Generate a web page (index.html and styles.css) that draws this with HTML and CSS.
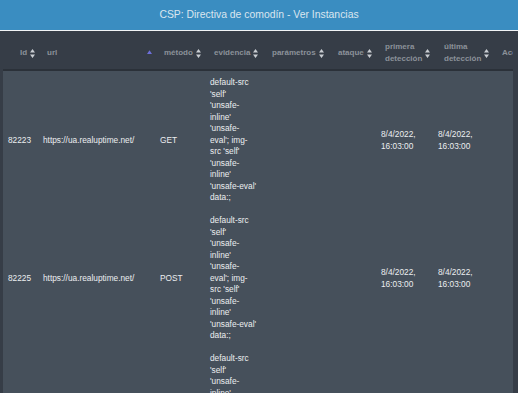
FILE: index.html
```html
<!DOCTYPE html>
<html lang="es">
<head>
    <meta charset="UTF-8">
    <title>CSP: Directiva de comodín - Ver Instancias</title>
    <link rel="stylesheet" href="styles.css">
</head>
<body>
    <div class="titlebar">CSP: Directiva de comodín - Ver Instancias</div>

    <div class="table-wrap">
        <table class="instances">
            <colgroup>
                <col class="w-id">
                <col class="w-url">
                <col class="w-method">
                <col class="w-evidence">
                <col class="w-param">
                <col class="w-attack">
                <col class="w-first">
                <col class="w-last">
                <col class="w-actions">
            </colgroup>
            <thead>
                <tr>
                    <th class="th-id"><span class="th-inner">Id <svg class="sort" viewBox="0 0 5 9"><path d="M2.5 0 5 3.6H0z M2.5 9 5 5.4H0z"/></svg></span></th>
                    <th><span class="th-inner th-url">url <svg class="sort-asc" viewBox="0 0 4 3"><path d="M2 0 4 3H0z"/></svg></span></th>
                    <th><span class="th-inner">método <svg class="sort" viewBox="0 0 5 9"><path d="M2.5 0 5 3.6H0z M2.5 9 5 5.4H0z"/></svg></span></th>
                    <th><span class="th-inner">evidencia <svg class="sort" viewBox="0 0 5 9"><path d="M2.5 0 5 3.6H0z M2.5 9 5 5.4H0z"/></svg></span></th>
                    <th><span class="th-inner">parámetros <svg class="sort" viewBox="0 0 5 9"><path d="M2.5 0 5 3.6H0z M2.5 9 5 5.4H0z"/></svg></span></th>
                    <th><span class="th-inner">ataque <svg class="sort" viewBox="0 0 5 9"><path d="M2.5 0 5 3.6H0z M2.5 9 5 5.4H0z"/></svg></span></th>
                    <th><span class="th-inner"><span>primera<br>detección</span> <svg class="sort" viewBox="0 0 5 9"><path d="M2.5 0 5 3.6H0z M2.5 9 5 5.4H0z"/></svg></span></th>
                    <th class="th-last"><span class="th-inner"><span>última<br>detección</span> <svg class="sort" viewBox="0 0 5 9"><path d="M2.5 0 5 3.6H0z M2.5 9 5 5.4H0z"/></svg></span></th>
                    <th><span class="th-inner">Acciones</span></th>
                </tr>
            </thead>
            <tbody>
                <tr>
                    <td>82223</td>
                    <td>https://ua.realuptime.net/</td>
                    <td>GET</td>
                    <td class="evidence">default-src 'self' 'unsafe-inline' 'unsafe-eval'; img-src 'self' 'unsafe-inline' 'unsafe-eval' data:;</td>
                    <td></td>
                    <td></td>
                    <td>8/4/2022, 16:03:00</td>
                    <td>8/4/2022, 16:03:00</td>
                    <td></td>
                </tr>
                <tr>
                    <td>82225</td>
                    <td>https://ua.realuptime.net/</td>
                    <td>POST</td>
                    <td class="evidence">default-src 'self' 'unsafe-inline' 'unsafe-eval'; img-src 'self' 'unsafe-inline' 'unsafe-eval' data:;</td>
                    <td></td>
                    <td></td>
                    <td>8/4/2022, 16:03:00</td>
                    <td>8/4/2022, 16:03:00</td>
                    <td></td>
                </tr>
                <tr>
                    <td>82227</td>
                    <td>https://ua.realuptime.net/</td>
                    <td>GET</td>
                    <td class="evidence">default-src 'self' 'unsafe-inline' 'unsafe-eval'; img-src 'self' 'unsafe-inline' 'unsafe-eval' data:;</td>
                    <td></td>
                    <td></td>
                    <td>8/4/2022, 16:03:00</td>
                    <td>8/4/2022, 16:03:00</td>
                    <td></td>
                </tr>
            </tbody>
        </table>
    </div>
</body>
</html>
```

FILE: styles.css
```css
body {
    margin: 0;
    height: 393px;
    overflow: hidden;
    font-family: "Liberation Sans", Arial, sans-serif;
    background-color: #363d47;
}

.titlebar {
    height: 30px;
    line-height: 29px;
    text-align: center;
    font-size: 10.4px;
    color: #dbe6ef;
    background-color: #3a8dc1;
    border-bottom: 1px solid #f2f4f6;
}

.table-wrap {
    margin: 0 5px 0 3px;
    overflow: hidden;
}

.instances {
    table-layout: fixed;
    width: 560px;
    border-collapse: collapse;
}

.w-id { width: 35px; }
.w-url { width: 117px; }
.w-method { width: 50px; }
.w-evidence { width: 58px; }
.w-param { width: 66px; }
.w-attack { width: 47px; }
.w-first { width: 57px; }
.w-last { width: 60px; }
.w-actions { width: 70px; }

.instances th {
    height: 32px;
    padding: 6px 0 0 9px;
    text-align: left;
    font-size: 8px;
    font-weight: bold;
    line-height: 12px;
    color: #8b9199;
    border-bottom: 2px solid #2b3139;
    white-space: nowrap;
}

.instances th.th-id {
    padding-left: 17px;
}

.instances th.th-last {
    padding-left: 11px;
}

.th-inner {
    display: flex;
    align-items: center;
    gap: 3px;
}

.th-url {
    justify-content: space-between;
    padding-right: 3px;
}

.sort {
    width: 5px;
    height: 9px;
    fill: #c9cdd2;
    flex-shrink: 0;
}

.sort-asc {
    width: 5px;
    height: 4px;
    margin-top: -3px;
    fill: #6d6fd9;
}

.instances td {
    padding: 6px 5px 5px;
    font-size: 8.3px;
    line-height: 11.55px;
    color: #eceef0;
    background-color: #46505b;
    vertical-align: middle;
}

.instances td.evidence {
    padding-right: 6px;
}
```
